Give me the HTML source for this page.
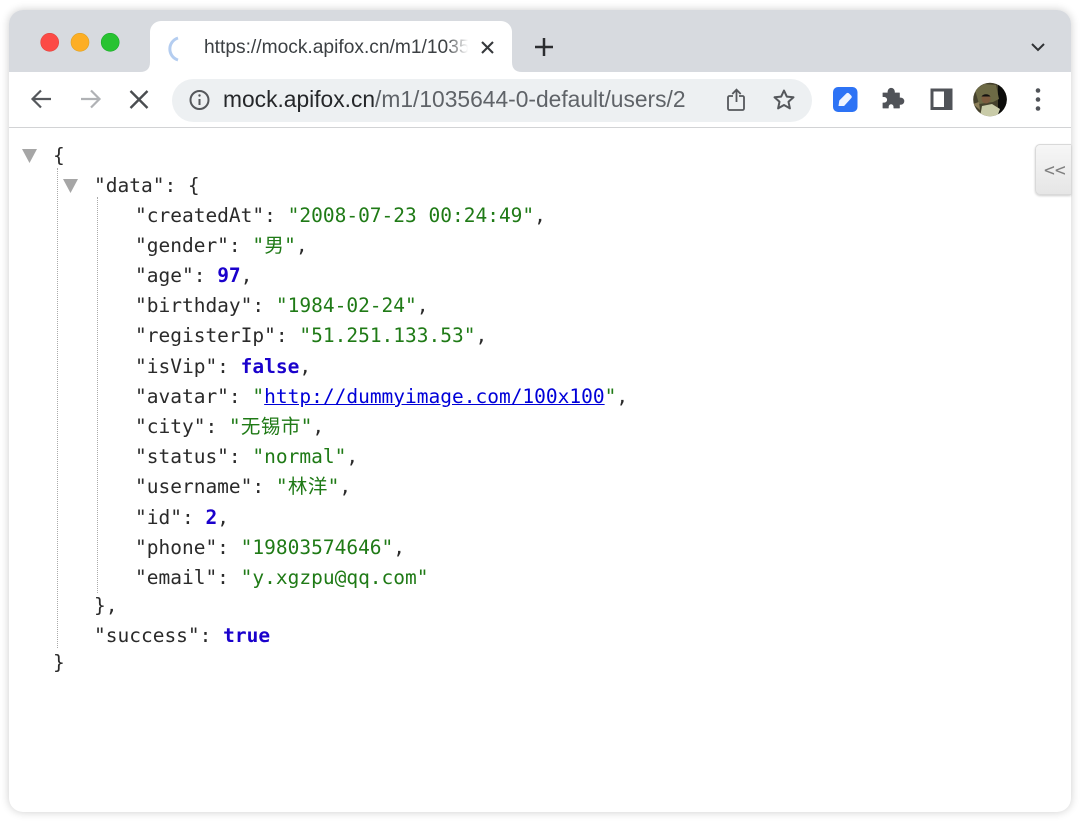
<!DOCTYPE html>
<html><head><meta charset="utf-8"><title>mock.apifox.cn</title>
<style>
html,body{margin:0;padding:0;width:1080px;height:821px;background:#fff;overflow:hidden}
#win{position:absolute;left:9px;top:10px;width:1062px;height:802px;border-radius:14px;background:#fff;box-shadow:0 0 9px rgba(0,0,0,.2);overflow:hidden}
#bar{position:absolute;left:9px;top:10px;width:1062px;height:62px;background:#d7dadf;border-radius:14px 14px 0 0}
#tab{position:absolute;left:150px;top:21px;width:362px;height:51px;background:#fff;border-radius:11px 11px 0 0}
.ab{position:absolute}
.ui{font-family:"Liberation Sans",sans-serif;white-space:pre;filter:blur(.3px)}
#line{position:absolute;left:9px;top:127px;width:1062px;height:1px;background:#d2d3d5}
#omni{position:absolute;left:172px;top:79px;width:640px;height:43px;border-radius:22px;background:#edf0f2}
.l{position:absolute;font-family:"DejaVu Sans Mono","Liberation Mono",monospace;font-size:19.5px;line-height:24px;height:24px;white-space:pre;color:#2a2a2a;filter:blur(.3px)}
.s{color:#1f7a16}
.n{color:#1a01cc;font-weight:bold}
.u{color:#0000d8;text-decoration:underline}
.c{font-family:"Noto Sans CJK SC",sans-serif;font-size:19.5px;display:inline-block;width:20px;text-align:center;line-height:24px}
.dot{position:absolute;width:0;border-left:1px dotted #aaa}
</style></head><body>
<div id="win"></div>
<div id="bar"></div>
<svg class="ab" style="left:0;top:0" width="1080" height="130" viewBox="0 0 1080 130">
<path d="M140 72q10 0 10-10v10zM522 72q-10 0-10-10v10z" fill="#fff"/>
<circle cx="49.7" cy="42.3" r="9" fill="#fc4a46" stroke="#e0443e" stroke-width=".6"/>
<circle cx="80" cy="42.3" r="9" fill="#fdae24" stroke="#dea123" stroke-width=".6"/>
<circle cx="110.2" cy="42.3" r="9" fill="#28c331" stroke="#1aab29" stroke-width=".6"/>
</svg>
<div id="tab"></div>
<svg class="ab" style="left:164px;top:33px" width="24" height="30" viewBox="0 0 24 30"><path d="M14 5A11.500 11.500 0 0 0 14 27" fill="none" stroke="#b4cdf0" stroke-width="3"/></svg>
<div class="ab ui" style="left:204px;top:37px;width:265px;height:22px;overflow:hidden;font-size:19.2px;line-height:22px;color:#3c4043">https://mock.apifox.cn/m1/1035644-0</div>
<div class="ab" style="left:446px;top:30px;width:26px;height:34px;background:linear-gradient(90deg,rgba(255,255,255,0),#fff 85%)"></div>
<svg class="ab" style="left:0;top:0" width="1080" height="130" viewBox="0 0 1080 130" fill="none">
<path d="M482 42l11 11M493 42l-11 11" stroke="#36383b" stroke-width="2.100"/>
<path d="M544 38v18M535 47h18" stroke="#2b2d30" stroke-width="2.500"/>
<path d="M1032 44l6 6 6-6" stroke="#303235" stroke-width="2"/>
</svg>
<div id="line"></div>
<div id="omni"></div>
<svg class="ab" style="left:0;top:70px" width="1080" height="60" viewBox="0 70 1080 60" fill="none">
<defs><clipPath id="av"><circle cx="990" cy="99.500" r="16.800"/></clipPath></defs>
<path d="M51 99H33M41 90.500l-8.500 8.500 8.500 8.500" stroke="#55585c" stroke-width="2.200"/>
<path d="M81 99h18M91 90.500l8.500 8.500-8.500 8.500" stroke="#b0b2b5" stroke-width="2.200"/>
<path d="M130.500 91l17 17M147.500 91l-17 17" stroke="#4a4d50" stroke-width="2.400"/>
<circle cx="199.500" cy="100" r="9" stroke="#55585c" stroke-width="2"/>
<path d="M199.500 99v6" stroke="#55585c" stroke-width="2"/><circle cx="199.500" cy="95.500" r="1.200" fill="#55585c"/>
<path d="M733 96h-3.500a1.500 1.500 0 0 0-1.500 1.500v11a1.500 1.500 0 0 0 1.500 1.500h13a1.500 1.500 0 0 0 1.500-1.500v-11a1.500 1.500 0 0 0-1.500-1.500H739" stroke="#55585c" stroke-width="1.800"/>
<path d="M736.500 102V90M732.300 94l4.200-4.300 4.200 4.300" stroke="#55585c" stroke-width="1.800"/>
<path d="M784 90.500l2.800 6.100 6.700.7-5 4.500 1.400 6.600-5.900-3.400-5.900 3.400 1.400-6.600-5-4.500 6.700-.7z" stroke="#55585c" stroke-width="2" stroke-linejoin="round"/>
<rect x="833" y="87" width="24.500" height="25" rx="5" fill="#2d73f5"/>
<path d="M838.500 106l.8-5.500 7-7a2 2 0 0 1 2.800 0l2 2a2 2 0 0 1 0 2.800l-7 7.700z" fill="#eef4ff"/>
<path d="M883 95h5v-1.500a3.200 3.200 0 0 1 6.400 0V95h5v5h1.300a3.200 3.200 0 0 1 0 6.400H899.400V110h-5.500v-1.300a2.800 2.800 0 0 0-5.600 0V110H883v-5h1.300a3.200 3.200 0 0 0 0-6.400H883z" fill="#505358" stroke="#505358" stroke-width=".8" stroke-linejoin="round" transform="translate(0 -2)"/>
<rect x="932" y="90" width="19" height="18.500" stroke="#505358" stroke-width="3"/>
<rect x="944" y="90" width="7" height="18.500" fill="#505358"/>
<g clip-path="url(#av)">
<rect x="973" y="82" width="34" height="35" fill="#45412c"/>
<rect x="998" y="82" width="9" height="35" fill="#0d0d0b"/>
<path d="M975 90l9-6 12 1 3 14-6 3-14 2z" fill="#6d6a45"/>
<path d="M973 104l6-2 1 8z" fill="#8c7f5a"/>
<circle cx="986" cy="99" r="4.500" fill="#7d5b3e"/><path d="M981.500 96.500a5 4 0 0 1 9 0z" fill="#141210"/>
<path d="M980 117l2-11 10-2 8 5-3 8z" fill="#c9cba8"/>
</g>
<circle cx="1038" cy="90.500" r="2.300" fill="#505358"/><circle cx="1038" cy="99.500" r="2.300" fill="#505358"/><circle cx="1038" cy="108.500" r="2.300" fill="#505358"/>
</svg>
<div class="ab ui" style="left:223px;top:86px;font-size:22.8px;line-height:26px;color:#25272a">mock.apifox.cn<span style="color:#5f6368">/m1/1035644-0-default/users/2</span></div>

<svg class="ab" style="left:0;top:130px" width="90" height="70" viewBox="0 130 90 70"><path d="M22 149h15l-7.500 14z" fill="#a6a6a6"/><path d="M63 179h15l-7.500 14z" fill="#a6a6a6"/></svg>
<div class="dot" style="left:57px;top:168px;height:480px"></div>
<div class="dot" style="left:97px;top:197px;height:396px"></div>

<div class="l" style="left:53px;top:144px">{</div>
<div class="l" style="left:94px;top:174px">"data": {</div>
<div class="l" style="left:135px;top:204px">"createdAt": <span class="s">"2008-07-23 00:24:49"</span>,</div>
<div class="l" style="left:135px;top:232px">"gender": <span class="s">"<span class="c">男</span>"</span>,</div>
<div class="l" style="left:135px;top:264px">"age": <span class="n">97</span>,</div>
<div class="l" style="left:135px;top:294px">"birthday": <span class="s">"1984-02-24"</span>,</div>
<div class="l" style="left:135px;top:324px">"registerIp": <span class="s">"51.251.133.53"</span>,</div>
<div class="l" style="left:135px;top:355px">"isVip": <span class="n">false</span>,</div>
<div class="l" style="left:135px;top:385px">"avatar": <span class="s">"</span><span class="u">http://dummyimage.com/100x100</span><span class="s">"</span>,</div>
<div class="l" style="left:135px;top:413px">"city": <span class="s">"<span class="c">无</span><span class="c">锡</span><span class="c">市</span>"</span>,</div>
<div class="l" style="left:135px;top:445px">"status": <span class="s">"normal"</span>,</div>
<div class="l" style="left:135px;top:473px">"username": <span class="s">"<span class="c">林</span><span class="c">洋</span>"</span>,</div>
<div class="l" style="left:135px;top:506px">"id": <span class="n">2</span>,</div>
<div class="l" style="left:135px;top:536px">"phone": <span class="s">"19803574646"</span>,</div>
<div class="l" style="left:135px;top:566px">"email": <span class="s">"y.xgzpu@qq.com"</span></div>
<div class="l" style="left:94px;top:594px">},</div>
<div class="l" style="left:94px;top:624px">"success": <span class="n">true</span></div>
<div class="l" style="left:53px;top:651px">}</div>

<div class="ab" style="left:1035px;top:144px;width:36px;height:51px;box-sizing:border-box;border:1px solid #d9d9d9;border-right:0;border-radius:5px 0 0 5px;background:linear-gradient(#f6f6f6,#e6e6e6);box-shadow:0 1px 2px rgba(0,0,0,.2)"></div>
<div class="ab" style="left:1044px;top:161px;font-family:'DejaVu Sans Mono',monospace;font-size:18px;line-height:20px;color:#808080">&lt;&lt;</div>
</body></html>
